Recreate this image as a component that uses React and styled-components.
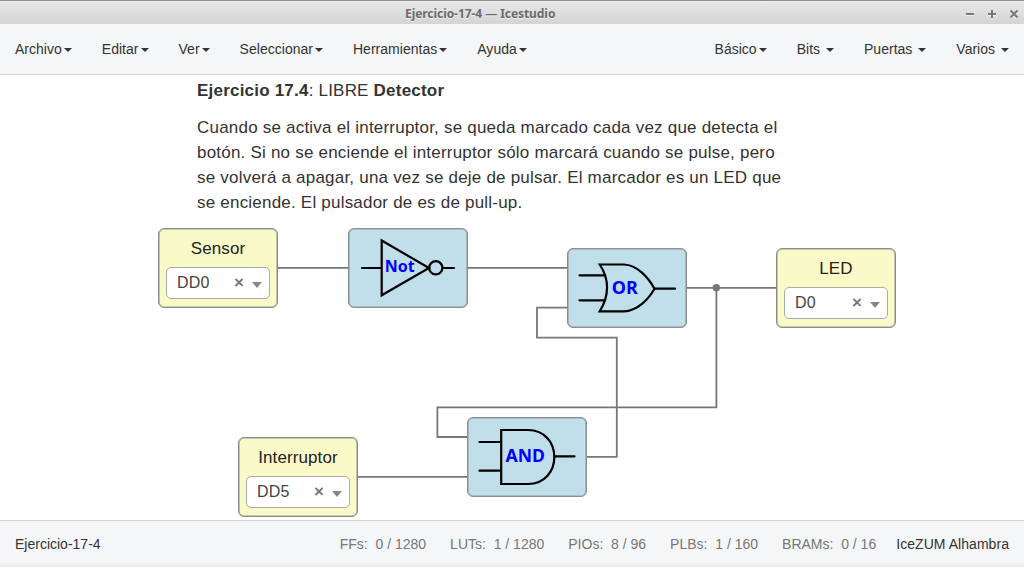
import React from 'react';
import styled, { createGlobalStyle } from 'styled-components';

const GlobalStyle = createGlobalStyle`
  * { box-sizing: border-box; }
  body {
    margin: 0;
    overflow: hidden;
    background: #fff;
    color: #333;
    font-family: "Liberation Sans", Arial, sans-serif;
    font-size: 14px;
    line-height: 20px;
  }
`;

const Window = styled.div`
  width: 1024px;
  height: 567px;
  display: flex;
  flex-direction: column;
`;

const TitleBar = styled.header`
  height: 24px;
  flex: none;
  display: flex;
  justify-content: space-between;
  align-items: center;
  padding: 2px 5px 0 405px;
  border-top: 1px solid #8f8c8f;
  background: linear-gradient(#f4f4f4 0, #e6e6e6 2px, #d4d4d4 100%);
`;

const WindowTitle = styled.h1`
  margin: 0;
  font: bold 12px/20px "Noto Sans", sans-serif;
  letter-spacing: -0.06px;
  color: #6b6b6b;
  text-shadow: 0 1px 0 #f0f0f0;
  white-space: nowrap;
`;

const WindowButtons = styled.div`
  display: flex;
  gap: 12px;
`;

const ButtonGlyph = styled.svg`
  width: 10px;
  height: 10px;
  fill: none;
  stroke: #777;
  stroke-width: 2;
  filter: drop-shadow(0 1px 0 #efefef);
`;

const MenuBar = styled.nav`
  height: 51px;
  flex: none;
  display: flex;
  justify-content: space-between;
  background: #f5f6f8;
  border-bottom: 1px solid #d3d6d9;
`;

const MenuGroup = styled.div`
  display: flex;
`;

const MenuItem = styled.div`
  display: flex;
  align-items: center;
  padding: 0 15px;
  letter-spacing: 0.02px;
  white-space: pre;
`;

const Caret = styled.span`
  margin: 1px 0 0 2px;
  border: 4px solid transparent;
  border-top-color: #333;
  border-bottom: 0;
`;

const Canvas = styled.main`
  position: relative;
  flex: 1;
  overflow: hidden;
  background: #fff;
`;

const Note = styled.article`
  position: absolute;
  left: 197px;
  top: 3px;
  font-size: 17px;
  line-height: 25px;
  letter-spacing: 0.21px;
  color: #333;
`;

const NoteLine = styled.p`
  margin: 0 0 12px;
  white-space: pre;
`;

const Wires = styled.svg`
  position: absolute;
  left: 0;
  top: 0;
  fill: none;
  stroke: #777;
  stroke-width: 1.8;
`;

const Block = styled.section`
  position: absolute;
  left: ${(p) => p.$x}px;
  top: ${(p) => p.$y}px;
  width: 120px;
  height: 80px;
  border: 1px solid #8c8c8c;
  border-radius: 6px;
  box-shadow: inset 0 0 0 0.6px #999;
`;

const PinBlock = styled(Block)`
  display: flex;
  flex-direction: column;
  align-items: center;
  padding-top: 7px;
  gap: 6px;
  background: #fafac8;
`;

const GateBlock = styled(Block)`
  background: #c1dfea;
`;

const PinName = styled.div`
  font-size: 17px;
  line-height: 25px;
  letter-spacing: 0.1px;
  color: #222;
`;

const PinSelect = styled.div`
  width: 104px;
  height: 32px;
  display: flex;
  align-items: center;
  padding: 0 7px 0 10px;
  border: 1px solid #aaa;
  border-radius: 5px;
  background: #fff;
  font-size: 16px;
  letter-spacing: 0.15px;
  color: #444;
`;

const PinValue = styled.span`
  flex: 1;
`;

const ClearMark = styled.span`
  font-size: 17px;
  font-weight: bold;
  color: #777;
`;

const SelectArrow = styled.span`
  margin: 4px 0 0 8px;
  border: 5px solid transparent;
  border-top: 6px solid #888;
  border-bottom: 0;
`;

const GateDrawing = styled.svg`
  display: block;
  margin: -1px;
  fill: none;
  stroke: #000;
  stroke-width: 2.2;
  stroke-linecap: round;
`;

const GateLabel = styled.text`
  font: bold ${(p) => p.$size}px "Noto Sans", sans-serif;
  fill: #00f;
  stroke: none;
`;

const StatusBar = styled.footer`
  height: 47px;
  flex: none;
  display: flex;
  align-items: center;
  padding: 0 15px;
  border-top: 1px solid #d3d6d9;
  background: linear-gradient(#f5f6f8 0, #f5f6f8 42px, #e6e7e9 100%);
`;

const ProjectName = styled.div`
  flex: 1;
`;

const Resources = styled.div`
  display: flex;
  gap: 24px;
  margin-right: 20px;
  color: #777;
`;

const Resource = styled.span`
  white-space: pre;
`;

const BoardName = styled.div`
  letter-spacing: 0.05px;
`;

const leftMenus = ['Archivo', 'Editar', 'Ver', 'Seleccionar', 'Herramientas', 'Ayuda'];
const rightMenus = ['Básico', 'Bits ', 'Puertas ', 'Varios '];
const resources = [
  ['FFs', '0 / 1280'],
  ['LUTs', '1 / 1280'],
  ['PIOs', '8 / 96'],
  ['PLBs', '1 / 160'],
  ['BRAMs', '0 / 16'],
];

function Menus({ names }) {
  return (
    <MenuGroup>
      {names.map((name) => (
        <MenuItem key={name}>{name}<Caret /></MenuItem>
      ))}
    </MenuGroup>
  );
}

function Pin({ x, y, name, value }) {
  return (
    <PinBlock $x={x} $y={y}>
      <PinName>{name}</PinName>
      <PinSelect>
        <PinValue>{value}</PinValue>
        <ClearMark>×</ClearMark>
        <SelectArrow />
      </PinSelect>
    </PinBlock>
  );
}

export default function App() {
  return (
    <Window>
      <GlobalStyle />
      <TitleBar>
        <WindowTitle>Ejercicio-17-4 — Icestudio</WindowTitle>
        <WindowButtons>
          <ButtonGlyph><path d="M1 5H9" /></ButtonGlyph>
          <ButtonGlyph><path d="M1 5H9M5 1V9" /></ButtonGlyph>
          <ButtonGlyph><path d="M1.5 1.5L8.5 8.5M8.5 1.5L1.5 8.5" /></ButtonGlyph>
        </WindowButtons>
      </TitleBar>
      <MenuBar>
        <Menus names={leftMenus} />
        <Menus names={rightMenus} />
      </MenuBar>
      <Canvas>
        <Note>
          <NoteLine><b>Ejercicio 17.4</b>: LIBRE <b>Detector</b></NoteLine>
          <NoteLine>
            {'Cuando se activa el interruptor, se queda marcado cada vez que detecta el\n'}
            {'botón. Si no se enciende el interruptor sólo marcará cuando se pulse, pero\n'}
            {'se volverá a apagar, una vez se deje de pulsar. El marcador es un LED que\n'}
            {'se enciende. El pulsador de es de pull-up.'}
          </NoteLine>
        </Note>
        <Wires width="1024" height="445" viewBox="0 75 1024 445">
          <path d="M277 267.8H349M467 267.8H568" />
          <path d="M568 307.7H537V337.7H616.8V456.8H586" />
          <path d="M686 287.8H777M716.4 287.8V407.3H437.4V437H468" />
          <path d="M357 476.9H468" />
          <circle cx="716.3" cy="287.7" r="3.7" fill="#777" stroke="none" />
        </Wires>
        <Pin x={158} y={153} name="Sensor" value="DD0" />
        <Pin x={776} y={173} name="LED" value="D0" />
        <Pin x={238} y={362} name="Interruptor" value="DD5" />
        <GateBlock $x={348} $y={153}>
          <GateDrawing width="120" height="80" viewBox="348 228 120 80">
            <path d="M362 268H381M381.7 240.5V295.3L429 268ZM443 268H454" />
            <circle cx="435.8" cy="267.8" r="6.6" />
            <GateLabel $size={16} x="384.8" y="272">Not</GateLabel>
          </GateDrawing>
        </GateBlock>
        <GateBlock $x={567} $y={173}>
          <GateDrawing width="120" height="80" viewBox="567 248 120 80">
            <path d="M579.5 275.3H605M579.5 300.3H605M654.5 288.7H675" />
            <path d="M599.7 264.5H624C637 265 648 277 654.5 288.7C648 300 637 311 624 311.3H599.7C609.5 296 609.5 279 599.7 264.5Z" />
            <GateLabel $size={18} x="611.7" y="294">OR</GateLabel>
          </GateDrawing>
        </GateBlock>
        <GateBlock $x={467} $y={342}>
          <GateDrawing width="120" height="80" viewBox="467 417 120 80">
            <path d="M479.5 442H501M479.5 470.7H501M554.5 456.3H574.5" />
            <path d="M501.2 430H528C545 430 554.3 443 554.3 457C554.3 471 545 484 528 484H501.2Z" />
            <GateLabel $size={17.6} x="505.5" y="462">AND</GateLabel>
          </GateDrawing>
        </GateBlock>
      </Canvas>
      <StatusBar>
        <ProjectName>Ejercicio-17-4</ProjectName>
        <Resources>
          {resources.map(([name, usage]) => (
            <Resource key={name}>{`${name}:  ${usage}`}</Resource>
          ))}
        </Resources>
        <BoardName>IceZUM Alhambra</BoardName>
      </StatusBar>
    </Window>
  );
}
